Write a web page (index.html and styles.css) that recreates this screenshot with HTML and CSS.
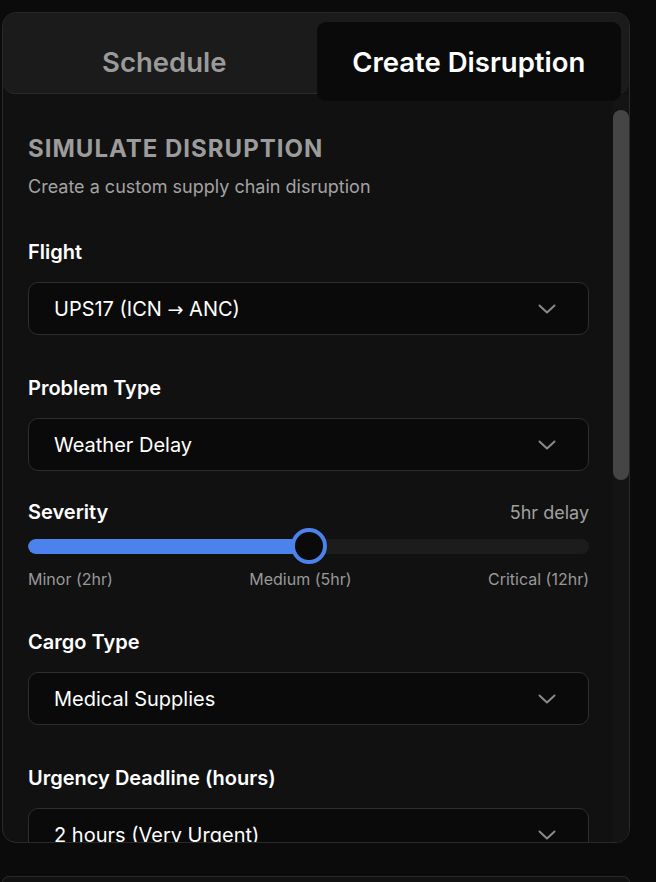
FILE: index.html
```html
<!DOCTYPE html>
<html lang="en">
<head>
<meta charset="utf-8">
<title>Create Disruption</title>
<link rel="stylesheet" href="styles.css">
</head>
<body>
<div class="panel">
  <div class="tabs">
    <div class="tab">Schedule</div>
    <div class="tab active">Create Disruption</div>
  </div>
  <div class="body">
    <div class="content">
      <h2 class="title">SIMULATE DISRUPTION</h2>
      <p class="subtitle">Create a custom supply chain disruption</p>

      <div class="field">
        <div class="label">Flight</div>
        <div class="select"><span>UPS17 (ICN <span class="arrow">→</span> ANC)</span><svg class="chev" viewBox="0 0 18 10" width="18" height="10"><path d="M1.5 1.5 L9 8.5 L16.5 1.5" fill="none" stroke="#8a8a8a" stroke-width="2" stroke-linecap="round" stroke-linejoin="round"/></svg></div>
      </div>

      <div class="field">
        <div class="label">Problem Type</div>
        <div class="select"><span>Weather Delay</span><svg class="chev" viewBox="0 0 18 10" width="18" height="10"><path d="M1.5 1.5 L9 8.5 L16.5 1.5" fill="none" stroke="#8a8a8a" stroke-width="2" stroke-linecap="round" stroke-linejoin="round"/></svg></div>
      </div>

      <div class="field severity">
        <div class="label-row"><span class="label">Severity</span><span class="value">5hr delay</span></div>
        <div class="slider">
          <div class="track"><div class="fill" style="width:50%"></div></div>
          <div class="knob" style="left:50%"></div>
        </div>
        <div class="scale"><span>Minor (2hr)</span><span>Medium (5hr)</span><span>Critical (12hr)</span></div>
      </div>

      <div class="field">
        <div class="label">Cargo Type</div>
        <div class="select"><span>Medical Supplies</span><svg class="chev" viewBox="0 0 18 10" width="18" height="10"><path d="M1.5 1.5 L9 8.5 L16.5 1.5" fill="none" stroke="#8a8a8a" stroke-width="2" stroke-linecap="round" stroke-linejoin="round"/></svg></div>
      </div>

      <div class="field">
        <div class="label">Urgency Deadline (hours)</div>
        <div class="select"><span>2 hours (Very Urgent)</span><svg class="chev" viewBox="0 0 18 10" width="18" height="10"><path d="M1.5 1.5 L9 8.5 L16.5 1.5" fill="none" stroke="#8a8a8a" stroke-width="2" stroke-linecap="round" stroke-linejoin="round"/></svg></div>
      </div>
    </div>
    <div class="scrollbar"><div class="thumb"></div></div>
  </div>
</div>
<div class="panel2"></div>
</body>
</html>
```

FILE: styles.css
```css
* { box-sizing: border-box; }
html, body { margin: 0; }
body {
  background: #0b0b0b;
  padding: 12px 0 0 2px;
  font-family: Inter, "Noto Sans", "Liberation Sans", sans-serif;
  color: #fff;
  height: 882px;
  overflow: hidden;
}
.panel {
  width: 628px;
  height: 831px;
  border: 1px solid #2a2a2a;
  border-radius: 14px;
  background: #111111;
  display: flex;
  flex-direction: column;
  overflow: hidden;
}
.tabs {
  flex: none;
  height: 81px;
  display: grid;
  grid-template-columns: 1fr 1fr;
  padding: 9px 8px 0 9px;
  background: #1b1b1b;
  border-bottom: 1px solid #2a2a2a;
  border-radius: 13px 13px 12px 12px;
}
.tab {
  height: 79px;
  display: flex;
  align-items: center;
  justify-content: center;
  font-size: 27.5px;
  font-weight: 600;
  color: #9a9a9a;
  position: relative;
  z-index: 2;
}
.tab.active {
  background: #0a0a0a;
  color: #ffffff;
  border-radius: 9px;
}
.body {
  flex: 1;
  min-height: 0;
  display: flex;
}
.content {
  flex: 1;
  min-width: 0;
  overflow: hidden;
  padding: 40px 24px 0 25px;
}
.scrollbar {
  flex: none;
  width: 16px;
  background: #141414;
  padding-top: 16px;
}
.thumb {
  height: 370px;
  border-radius: 8px;
  background: #454545;
}
.title {
  margin: 0;
  font-size: 24px;
  line-height: 30px;
  font-weight: 700;
  letter-spacing: 1px;
  color: #9c9c9c;
}
.subtitle {
  margin: 12px 0 0;
  font-size: 18px;
  line-height: 22px;
  color: #a3a3a3;
}
.field { margin-top: 42px; }
.field + .field { margin-top: 41px; }
.field + .severity { margin-top: 29px; }
.label {
  font-size: 20px;
  line-height: 24px;
  font-weight: 600;
  color: #ffffff;
}
.select {
  margin-top: 18px;
  height: 53px;
  background: #0a0a0a;
  border: 1.5px solid #2e2e2e;
  border-radius: 10px;
  display: flex;
  align-items: center;
  justify-content: space-between;
  padding: 0 32px 0 25px;
  font-size: 20px;
  color: #ffffff;
}
.arrow { font-family: "DejaVu Sans", sans-serif; font-size: 19px; }
.chev { display: block; }
.label-row {
  display: flex;
  justify-content: space-between;
  align-items: center;
  height: 24px;
}
.value { font-size: 18px; color: #a0a0a0; }
.slider {
  position: relative;
  height: 36px;
  margin-top: 4px;
  display: flex;
  align-items: center;
}
.track {
  width: 100%;
  height: 15px;
  border-radius: 8px;
  background: #1c1c1c;
  overflow: hidden;
}
.fill { height: 100%; background: #4c82ec; border-radius: 8px 0 0 8px; }
.knob {
  position: absolute;
  top: 0;
  width: 36px;
  height: 36px;
  margin-left: -18px;
  border-radius: 50%;
  border: 4px solid #4c82ec;
  background: #0a0a0a;
}
.scale {
  margin-top: 5px;
  display: flex;
  justify-content: space-between;
  font-size: 16px;
  line-height: 20px;
  color: #999999;
}
.panel2 {
  margin-top: 33px;
  width: 628px;
  height: 7px;
  border: 1px solid #2a2a2a;
  border-bottom: none;
  border-radius: 14px 14px 0 0;
  background: #111111;
}
```
